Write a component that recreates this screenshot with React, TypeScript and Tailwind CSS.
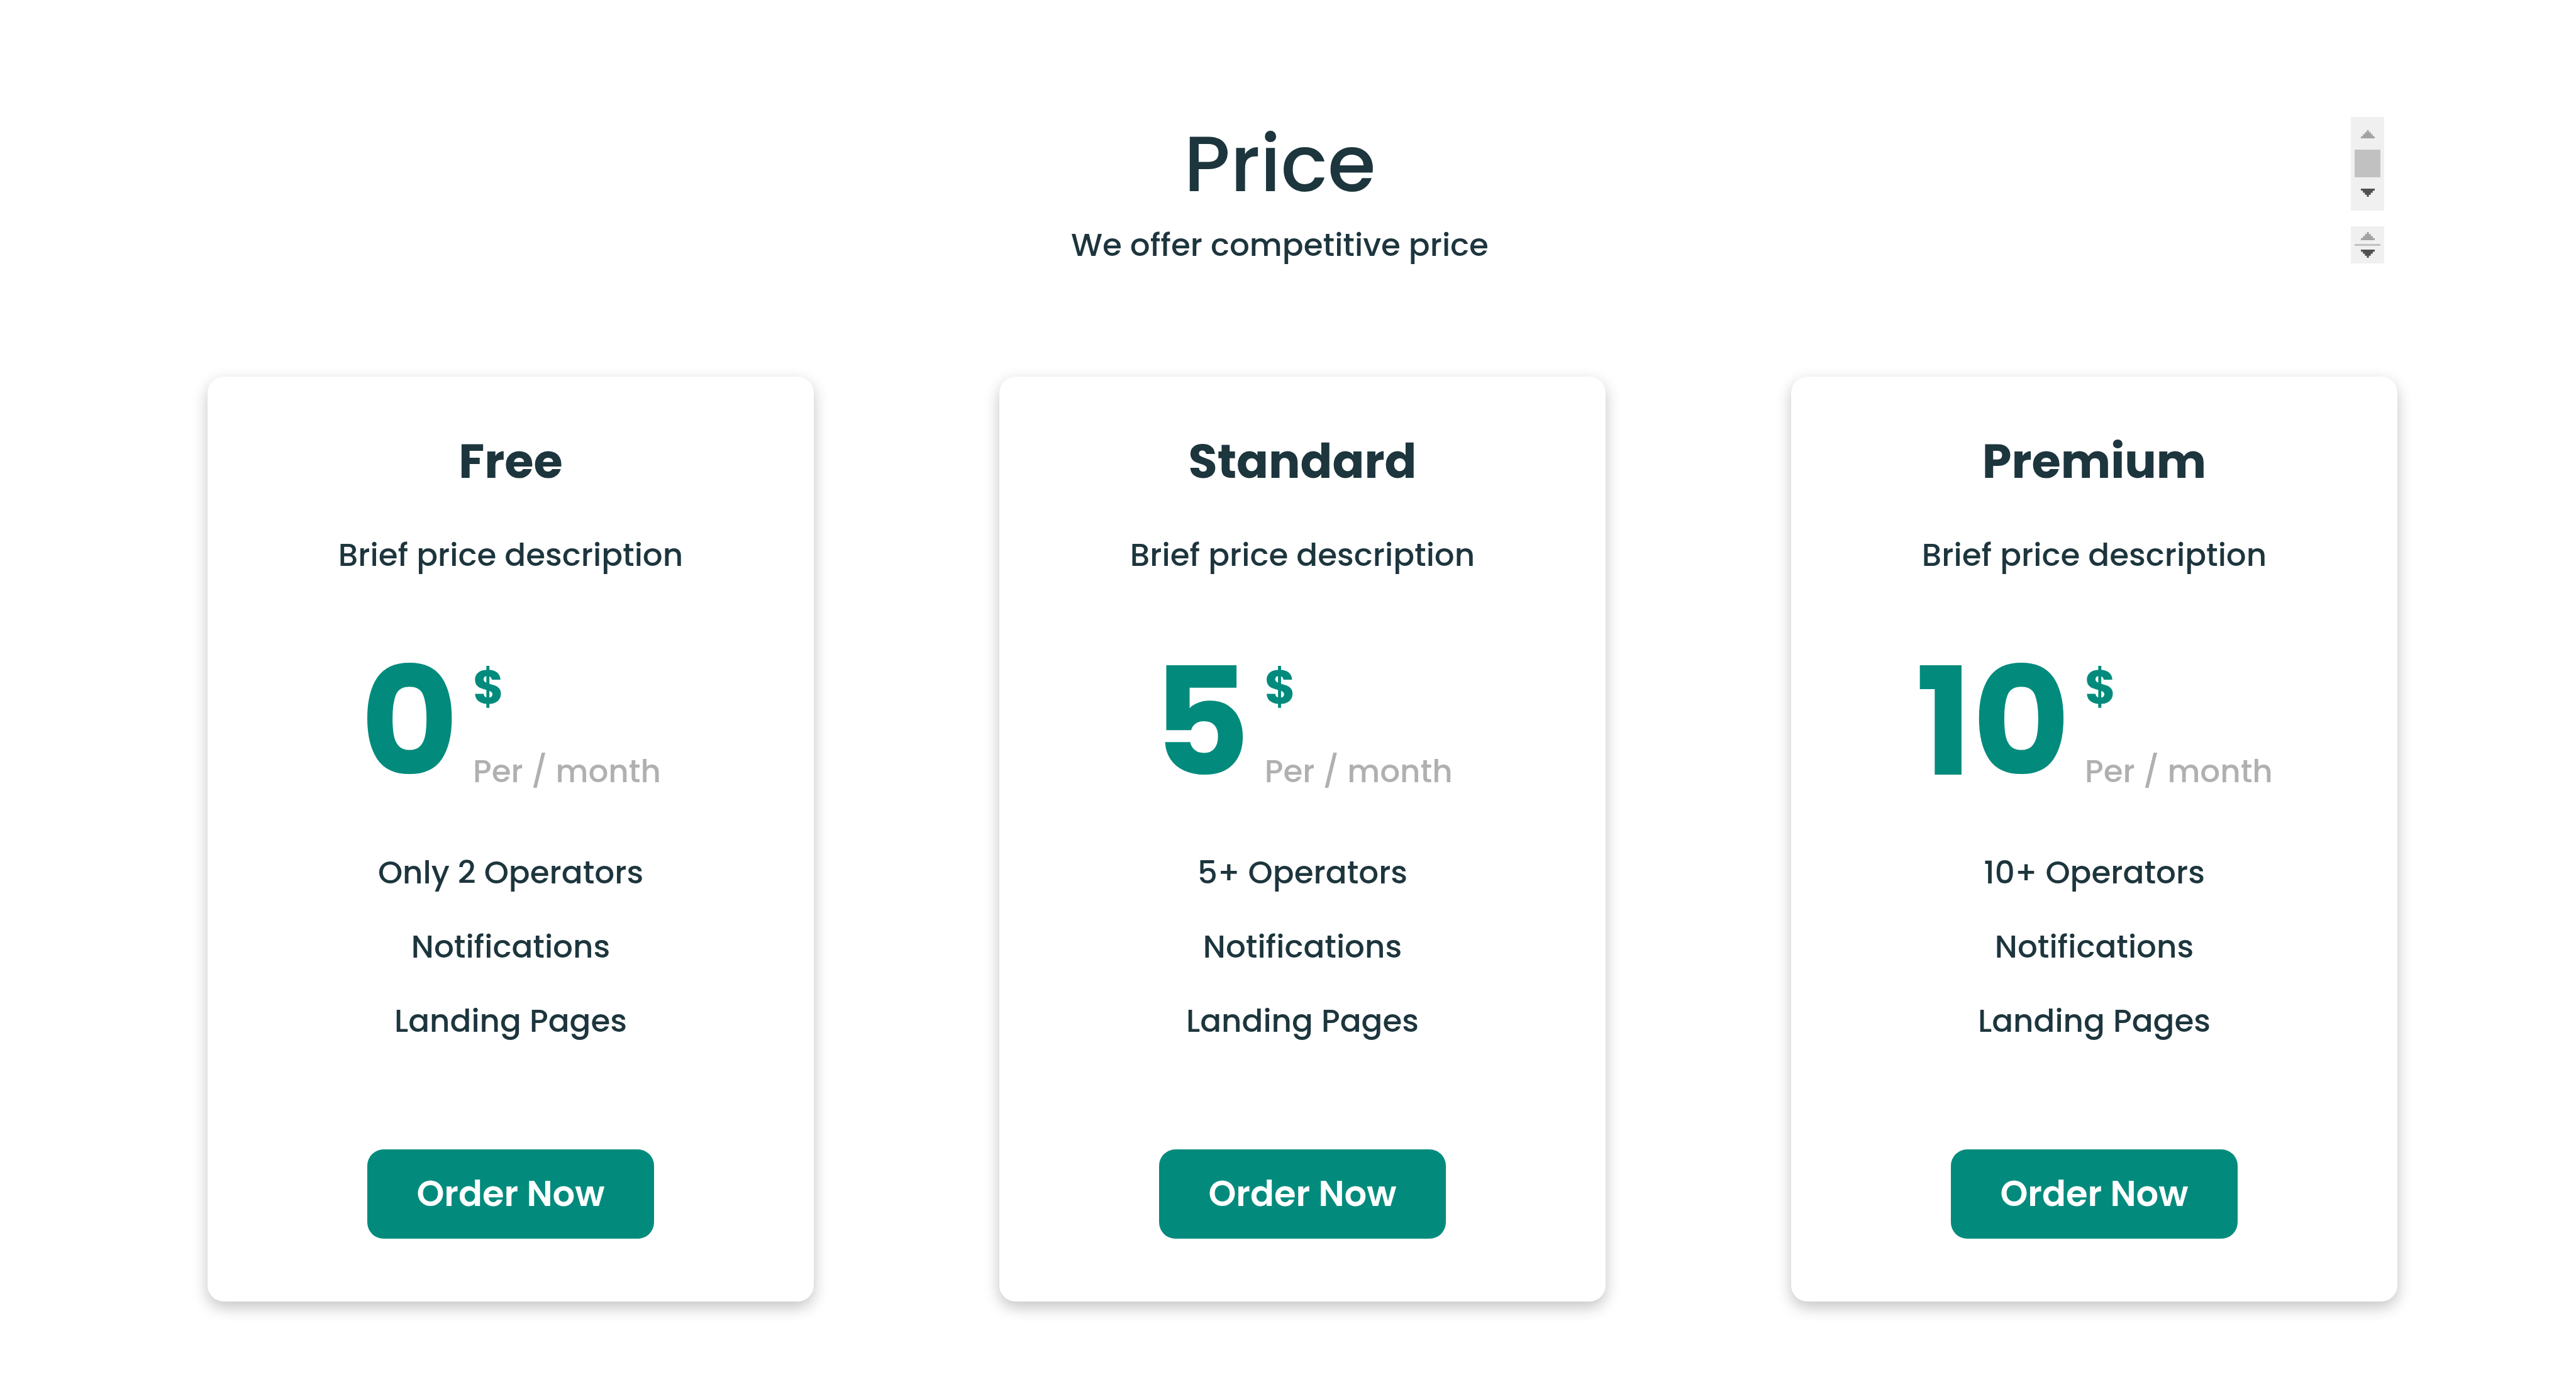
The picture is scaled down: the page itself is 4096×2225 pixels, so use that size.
type Plan = {
  name: string;
  price: string;
  features: string[];
};

const plans: Plan[] = [
  { name: "Free", price: "0", features: ["Only 2 Operators", "Notifications", "Landing Pages"] },
  { name: "Standard", price: "5", features: ["5+ Operators", "Notifications", "Landing Pages"] },
  { name: "Premium", price: "10", features: ["10+ Operators", "Notifications", "Landing Pages"] },
];

function ArrowUp() {
  return (
    <svg className="h-[13px] w-[22px]" viewBox="0 0 7 4" preserveAspectRatio="none" aria-hidden="true">
      <path fill="#a3a3a3" d="M3 0h1v1h1v1h1v1h1v1H0V3h1V2h1V1h1z" />
    </svg>
  );
}

function ArrowDown() {
  return (
    <svg className="h-[13px] w-[22px]" viewBox="0 0 7 4" preserveAspectRatio="none" aria-hidden="true">
      <path fill="#505050" d="M0 0h7v1H6v1H5v1H4v1H3V3H2V2H1V1H0z" />
    </svg>
  );
}

function PlanCard({ plan }: { plan: Plan }) {
  return (
    <article className="flex flex-1 flex-col items-center rounded-[26px] bg-white pt-[91px] pb-[100px] shadow-[0_9px_25px_rgba(0,0,0,0.24)]">
      <h2 className="text-[75px] leading-[88px] font-bold">{plan.name}</h2>
      <p className="mt-[75px] text-[50px] leading-[60px] font-medium">Brief price description</p>
      <div className="mt-[116px] flex items-start gap-[23px]">
        <span className="text-[239px] leading-[240px] font-bold text-[#028b7c]">{plan.price}</span>
        <div className="flex flex-col pt-[20px]">
          <span className="text-[75px] leading-[88px] font-bold text-[#028b7c]">$</span>
          <span className="mt-[60px] text-[50px] leading-[60px] font-medium text-[#b0b0b0]">Per / month</span>
        </div>
      </div>
      <ul className="mt-[89px] flex flex-col gap-[58px] text-center text-[50px] leading-[60px] font-medium">
        {plan.features.map((feature) => (
          <li key={feature}>{feature}</li>
        ))}
      </ul>
      <button
        type="button"
        className="mt-[174px] h-[142px] rounded-[26px] bg-[#028b7c] px-[78px] text-[56px] leading-[66px] font-semibold text-white"
      >
        Order Now
      </button>
    </article>
  );
}

export default function App() {
  return (
    <main className="min-h-screen bg-white pt-[186px] font-['Poppins','Inter',sans-serif] text-[#1d353d]">
      <header className="grid grid-cols-[1fr_53px] gap-y-[25px] pr-[305px] pl-[332px] text-center">
        <h1 className="text-[124px] leading-[149px] font-medium">Price</h1>
        <div className="flex flex-col items-center bg-[#f0f0f0] pt-[21px]">
          <ArrowUp />
          <div className="my-[18px] h-[44px] w-[41px] bg-[#c1c1c1]" />
          <ArrowDown />
        </div>
        <p className="text-[50px] leading-[59px] font-medium">We offer competitive price</p>
        <div className="flex flex-col items-center bg-[#f0f0f0] pt-[9px]">
          <ArrowUp />
          <div className="my-[6px] h-[3px] w-[41px] bg-[#c1c1c1]" />
          <ArrowDown />
        </div>
      </header>
      <section className="mt-[180px] flex gap-[295px] pr-[284px] pl-[330px]">
        {plans.map((plan) => (
          <PlanCard key={plan.name} plan={plan} />
        ))}
      </section>
    </main>
  );
}
